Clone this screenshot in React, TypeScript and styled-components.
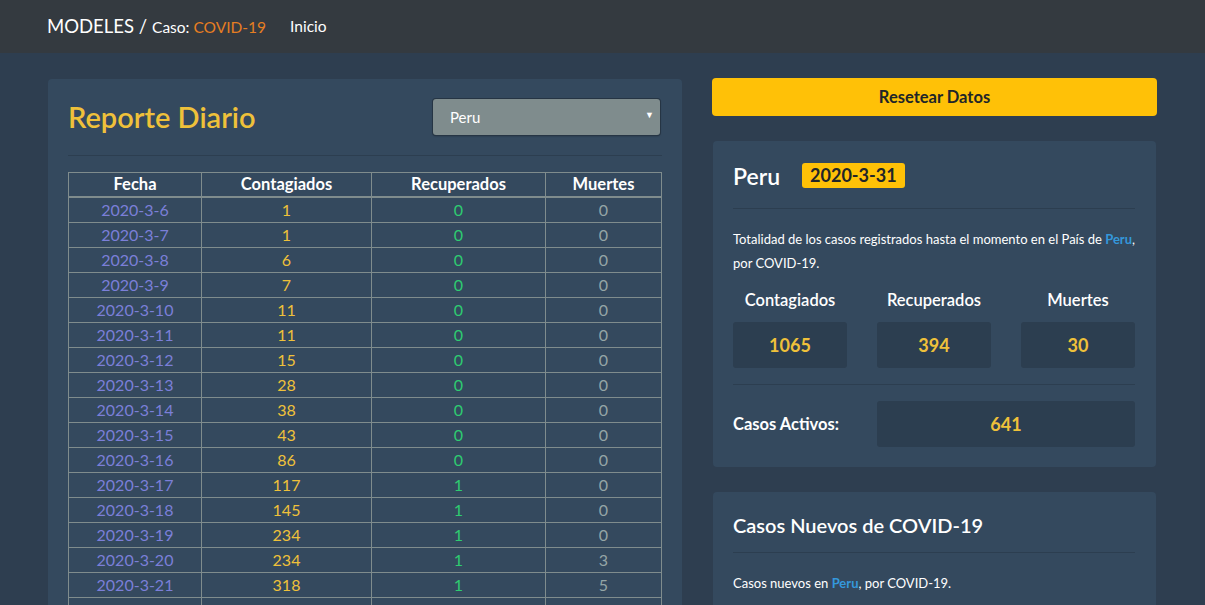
import React from "react";
import styled, { createGlobalStyle } from "styled-components";

const Global = createGlobalStyle`
  html, body { margin: 0; padding: 0; }
  body {
    background: #2e3e50;
    color: #ffffff;
    font-family: Lato, "Noto Sans", "Liberation Sans", sans-serif;
    font-size: 15px;
    line-height: 1.5;
    overflow: hidden;
  }
  * { box-sizing: border-box; }
`;

const Navbar = styled.nav`
  height: 53px;
  background: #343a40;
  display: flex;
  align-items: center;
  padding: 0 47px;
  gap: 24px;
`;

const Brand = styled.div`
  font-size: 18.5px;
  color: #ffffff;
  display: flex;
  align-items: baseline;
  gap: 5px;
`;

const Small = styled.span`
  font-size: 15.5px;
`;

const Orange = styled.span`
  color: #e67e22;
`;

const NavLink = styled.a`
  font-size: 15.5px;
  color: #ffffff;
  text-decoration: none;
`;

const Container = styled.main`
  width: 1109px;
  margin: 0 auto;
  padding-top: 25px;
  display: grid;
  grid-template-columns: 634px 445px;
  gap: 30px;
  align-items: start;
`;

const Card = styled.section`
  background: #34495e;
  border-radius: 4px;
  padding: 20px 21px 20px 20px;
  margin: 0 1px;
`;

const LeftCard = styled.section`
  background: #34495e;
  border-radius: 4px;
  padding: 20px;
  margin-top: 1px;
  min-height: 560px;
`;

const Column = styled.div`
  display: flex;
  flex-direction: column;
  gap: 25px;
`;

const HeaderRow = styled.div`
  display: flex;
  justify-content: space-between;
  align-items: center;
  padding-bottom: 20px;
  border-bottom: 1px solid rgba(0, 0, 0, 0.15);
  margin-bottom: 16px;
`;

const Title = styled.h1`
  margin: 0;
  font-size: 29px;
  font-weight: 600;
  color: #efc13a;
  line-height: 36px;
  margin-top: -1px;
`;

const Select = styled.div`
  width: 227px;
  height: 36px;
  background: #7f8c8d;
  border-radius: 3px;
  box-shadow: 0 0 0 1px #263544, 0 1px 2px rgba(0,0,0,0.4);
  display: flex;
  align-items: center;
  justify-content: space-between;
  padding: 0 6px 0 17px;
  font-size: 15px;
  color: #ffffff;
  margin-right: 2px;
`;

const Arrow = styled.span`
  font-size: 9px;
  color: #ffffff;
  margin-top: -4px;
`;

const Table = styled.table`
  width: 100%;
  border-collapse: collapse;
  text-align: center;
`;

const Th = styled.th<{ $w: number }>`
  width: ${(p) => p.$w}px;
  border: 1px solid #7f8c8d;
  border-bottom-width: 2px;
  font-size: 16.5px;
  font-weight: 700;
  line-height: 23px;
  padding: 0;
  color: #ffffff;
`;

const Td = styled.td<{ $c: string }>`
  border: 1px solid #7f8c8d;
  font-size: 16px;
  line-height: 24px;
  padding: 0;
  color: ${(p) => p.$c};
`;

const ResetButton = styled.button`
  width: 100%;
  height: 38px;
  background: #ffc107;
  border: none;
  border-radius: 4px;
  font-family: inherit;
  font-size: 16.5px;
  font-weight: 700;
  color: #212529;
  cursor: pointer;
`;

const CountryHead = styled.div`
  display: flex;
  align-items: center;
  gap: 22px;
  padding: 0 0 17px;
  border-bottom: 1px solid rgba(0, 0, 0, 0.15);
`;

const Country = styled.h2`
  margin: 0;
  font-size: 23px;
  font-weight: 600;
  line-height: 30px;
`;

const Badge = styled.span`
  background: #ffc107;
  color: #212529;
  font-size: 18px;
  font-weight: 700;
  padding: 0 8px;
  border-radius: 3px;
  line-height: 25px;
  margin-top: -2px;
`;

const Text = styled.p<{ $top: number; $bottom: number }>`
  margin: ${(p) => p.$top}px 0 ${(p) => p.$bottom}px;
  font-size: 13px;
  line-height: 24px;
`;

const Link = styled.span`
  color: #3498db;
  font-weight: 700;
`;

const StatGrid = styled.div`
  display: grid;
  grid-template-columns: repeat(3, 1fr);
  column-gap: 30px;
  row-gap: 10px;
  text-align: center;
`;

const StatLabel = styled.div`
  font-size: 16.5px;
  font-weight: 600;
  line-height: 24px;
  margin-top: 1px;
`;

const StatBox = styled.div<{ $span?: number }>`
  grid-column: span ${(p) => p.$span ?? 1};
  background: #2c3e50;
  border-radius: 3px;
  height: 46px;
  display: flex;
  align-items: center;
  justify-content: center;
  font-size: 18px;
  font-weight: 700;
  color: #efc13a;
`;

const Divider = styled.div`
  grid-column: 1 / -1;
  border-top: 1px solid rgba(0, 0, 0, 0.15);
  margin: 6px 0 6px;
`;

const ActiveLabel = styled.div`
  font-size: 16.5px;
  font-weight: 700;
  display: flex;
  align-items: center;
  text-align: left;
`;

const SectionTitle = styled.h3`
  margin: 0;
  font-size: 20px;
  font-weight: 600;
  line-height: 26px;
  padding: 0 0 14px;
  border-bottom: 1px solid rgba(0, 0, 0, 0.15);
`;

const rows: [string, number, number, number][] = [
  ["2020-3-6", 1, 0, 0],
  ["2020-3-7", 1, 0, 0],
  ["2020-3-8", 6, 0, 0],
  ["2020-3-9", 7, 0, 0],
  ["2020-3-10", 11, 0, 0],
  ["2020-3-11", 11, 0, 0],
  ["2020-3-12", 15, 0, 0],
  ["2020-3-13", 28, 0, 0],
  ["2020-3-14", 38, 0, 0],
  ["2020-3-15", 43, 0, 0],
  ["2020-3-16", 86, 0, 0],
  ["2020-3-17", 117, 1, 0],
  ["2020-3-18", 145, 1, 0],
  ["2020-3-19", 234, 1, 0],
  ["2020-3-20", 234, 1, 3],
  ["2020-3-21", 318, 1, 5],
  ["2020-3-22", 363, 1, 5],
  ["2020-3-23", 395, 1, 5],
];

export default function App() {
  return (
    <>
      <Global />
      <Navbar>
        <Brand>
          MODELES / <Small>Caso: <Orange>COVID-19</Orange></Small>
        </Brand>
        <NavLink href="#">Inicio</NavLink>
      </Navbar>
      <Container>
        <LeftCard>
          <HeaderRow>
            <Title>Reporte Diario</Title>
            <Select>
              <span>Peru</span>
              <Arrow>▼</Arrow>
            </Select>
          </HeaderRow>
          <Table>
            <thead>
              <tr>
                <Th $w={133}>Fecha</Th>
                <Th $w={170}>Contagiados</Th>
                <Th $w={174}>Recuperados</Th>
                <Th $w={116}>Muertes</Th>
              </tr>
            </thead>
            <tbody>
              {rows.map(([d, c, r, m]) => (
                <tr key={d}>
                  <Td $c="#7b7fd8">{d}</Td>
                  <Td $c="#efc13a">{c}</Td>
                  <Td $c="#2ecc71">{r}</Td>
                  <Td $c="#95a5a6">{m}</Td>
                </tr>
              ))}
            </tbody>
          </Table>
        </LeftCard>
        <Column>
          <ResetButton>Resetear Datos</ResetButton>
          <Card>
            <CountryHead>
              <Country>Peru</Country>
              <Badge>2020-3-31</Badge>
            </CountryHead>
            <Text $top={18} $bottom={12}>
              Totalidad de los casos registrados hasta el momento en el País de <Link>Peru</Link>, por COVID-19.
            </Text>
            <StatGrid>
              <StatLabel>Contagiados</StatLabel>
              <StatLabel>Recuperados</StatLabel>
              <StatLabel>Muertes</StatLabel>
              <StatBox>1065</StatBox>
              <StatBox>394</StatBox>
              <StatBox>30</StatBox>
              <Divider />
              <ActiveLabel>Casos Activos:</ActiveLabel>
              <StatBox $span={2}>641</StatBox>
            </StatGrid>
          </Card>
          <Card>
            <SectionTitle>Casos Nuevos de COVID-19</SectionTitle>
            <Text $top={18} $bottom={8}>
              Casos nuevos en <Link>Peru</Link>, por COVID-19.
            </Text>
          </Card>
        </Column>
      </Container>
    </>
  );
}
